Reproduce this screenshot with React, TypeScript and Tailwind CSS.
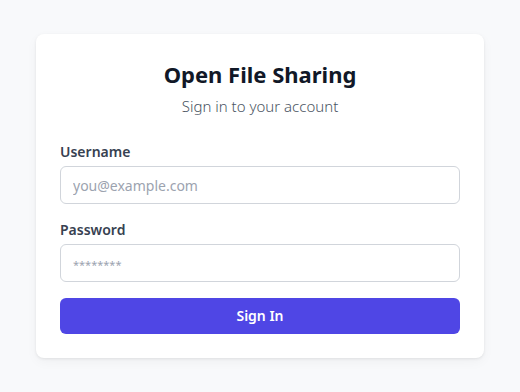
import React, { useState } from 'react';

const App: React.FC = () => {
    const [username, setUsername] = useState('');
    const [password, setPassword] = useState('');

    return (
        <div className="min-h-screen bg-[#f8f9fb] flex items-center justify-center font-['Noto_Sans',sans-serif]">
            <div className="w-[448px] bg-white rounded-lg shadow-[0_1px_3px_rgba(0,0,0,0.08),0_4px_12px_rgba(0,0,0,0.04)] p-6">
                <div className="text-center mb-6">
                    <h1 className="text-[22px] leading-8 font-bold text-[#111827]">Open File Sharing</h1>
                    <p className="mt-1 text-[15px] leading-6 font-light text-[#4b5563]">Sign in to your account</p>
                </div>
                <form className="space-y-4" onSubmit={e => e.preventDefault()}>
                    <div>
                        <label htmlFor="username" className="block mb-1 text-sm leading-5 font-semibold text-[#374151]">Username</label>
                        <input
                            id="username"
                            type="text"
                            value={username}
                            onChange={e => setUsername(e.target.value)}
                            placeholder="you@example.com"
                            className="w-full h-[38px] px-3 text-sm text-[#111827] placeholder-[#9ca3af] border border-[#d1d5db] rounded-md outline-none focus:border-[#4f46e5]"
                        />
                    </div>
                    <div>
                        <label htmlFor="password" className="block mb-1 text-sm leading-5 font-semibold text-[#374151]">Password</label>
                        <input
                            id="password"
                            type="password"
                            value={password}
                            onChange={e => setPassword(e.target.value)}
                            placeholder="********"
                            className="w-full h-[38px] px-3 text-sm text-[#111827] placeholder-[#9ca3af] placeholder:text-[11px] border border-[#d1d5db] rounded-md outline-none focus:border-[#4f46e5]"
                        />
                    </div>
                    <button type="submit" className="w-full h-9 rounded-md bg-[#4f46e5] text-white text-sm font-semibold hover:bg-[#4338ca]">
                        Sign In
                    </button>
                </form>
            </div>
        </div>
    );
};

export default App;
